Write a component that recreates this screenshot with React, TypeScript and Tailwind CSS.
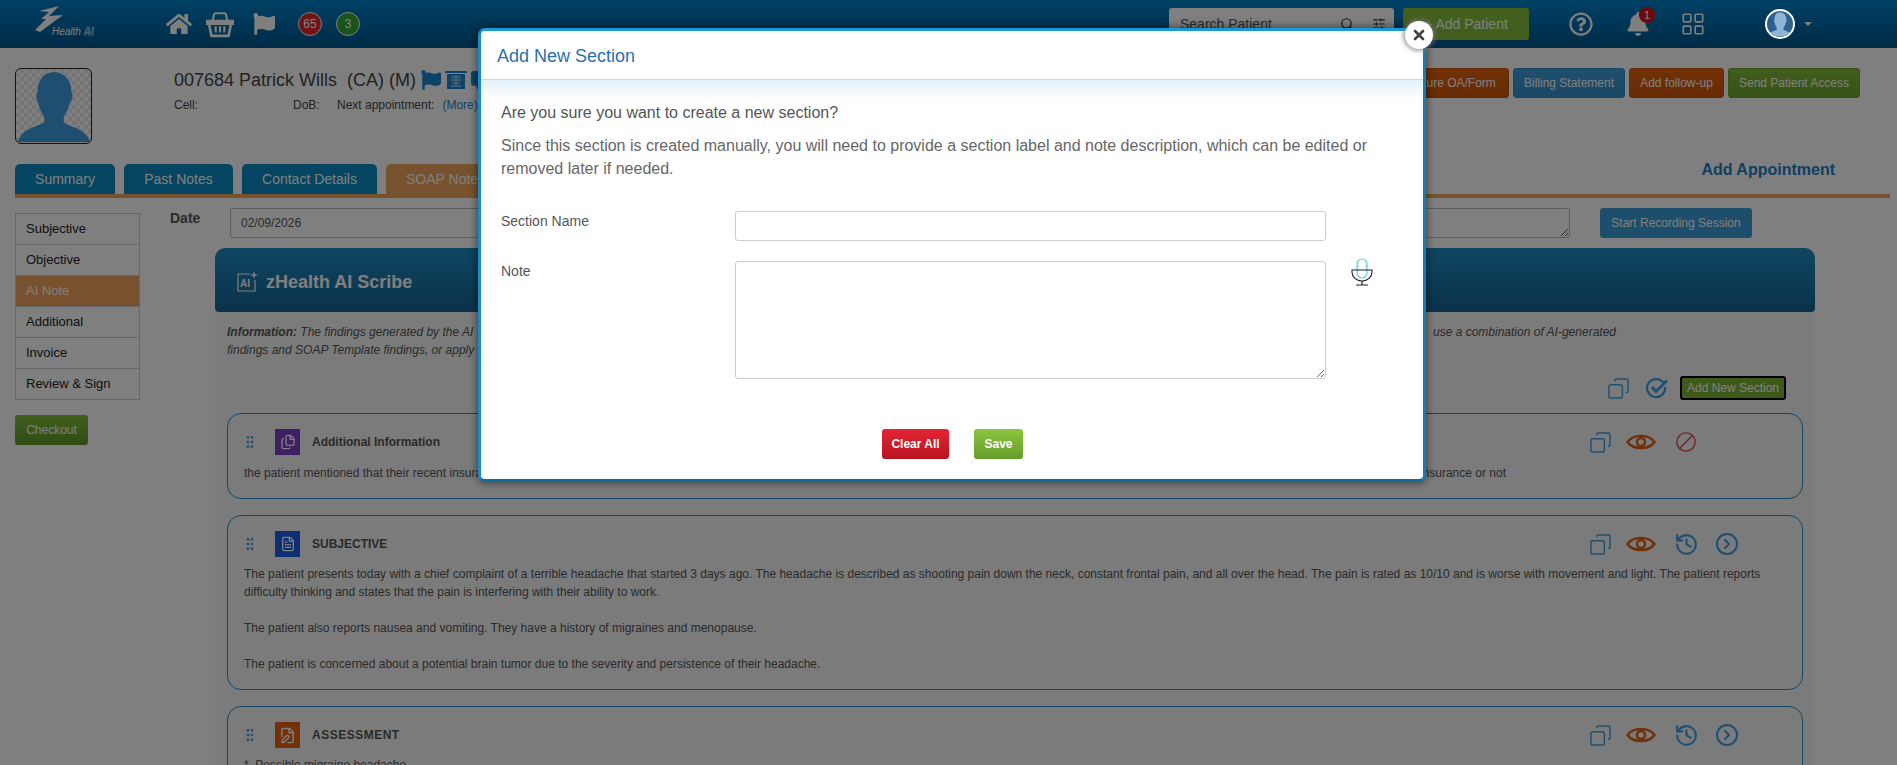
import { Ban, CircleChevronRight, Copy, FilePen, Files, FileText, GripVertical, History, LayoutGrid, Search, SlidersHorizontal, X } from 'lucide-react'
import { FaBell, FaFlag, FaHome, FaCommentAlt, FaRegQuestionCircle } from 'react-icons/fa'
import type { ReactNode } from 'react'

const tabs = [
  { label: 'Summary', className: 'w-[100px]' },
  { label: 'Past Notes', className: 'w-[109px]' },
  { label: 'Contact Details', className: 'w-[135px]' },
]

const sideItems = ['Subjective', 'Objective', 'AI Note', 'Additional', 'Invoice', 'Review & Sign']

function Basket() {
  return (
    <svg viewBox="0 0 26 26" className="size-[28px]" fill="none" stroke="#fff" strokeWidth="2">
      <path d="M6 11 L7.500 4 Q8 3 9 3 H17 Q18 3 18.500 4 L20 11" />
      <path d="M1 10 H25 V13 H1 Z" fill="#fff" />
      <path d="M3 14 L5 24 H21 L23 14" strokeWidth="2.400" />
      <path d="M9 15 V21 M13 15 V21 M17 15 V21" />
    </svg>
  )
}

function Silhouette({ fill }: { fill: string }) {
  return (
    <svg viewBox="0 0 77 76" className="size-full">
      <path
        fill={fill}
        d="M39 3 C28 3 22 12 22 24 C20 26 21 33 23 35 C24 42 27 46 29 49 L29 55 C20 60 6 61 2 75 H76 C72 61 56 60 49 55 L49 49 C51 46 54 42 55 35 C58 33 59 26 57 24 C57 12 50 3 39 3 Z"
      />
    </svg>
  )
}

function ActionButton({ className, children }: { className: string; children: ReactNode }) {
  return (
    <button className={`h-[30px] rounded-[3px] border text-xs whitespace-nowrap text-white ${className}`}>
      {children}
    </button>
  )
}

function AiIcon() {
  return (
    <svg viewBox="0 0 22 22" className="size-[22px]" fill="none" stroke="#fff" strokeWidth="1.200">
      <path d="M14 3 H2 V20 H19 V9" />
      <path d="M18 0 L19 3 L22 4 L19 5 L18 8 L17 5 L14 4 L17 3 Z" fill="#fff" stroke="none" />
      <text x="4" y="16" fontSize="10" fontWeight="700" fill="#fff" stroke="none" fontFamily="Liberation Sans">AI</text>
    </svg>
  )
}

function CheckRing() {
  return (
    <svg viewBox="0 0 22 20" className="h-[20px] w-[22px]" fill="none" stroke="#3f9ee0" strokeWidth="2.200">
      <path d="M17.500 5 A9 9 0 1 0 19 9" />
      <path d="M6 9 L10 13.500 L21 2.500" strokeWidth="2.800" />
    </svg>
  )
}

function EyeIcon() {
  return (
    <svg viewBox="0 0 30 20" className="ml-[14px] h-[20px] w-[30px]" fill="none" stroke="#e0600e" strokeWidth="2.500">
      <path d="M1.500 10 C7 2 23 2 28.500 10 C23 18 7 18 1.500 10 Z" />
      <circle cx="15" cy="10" r="4" />
    </svg>
  )
}

function Archive() {
  return (
    <svg viewBox="0 0 22 18" className="ml-[4px] h-[18px] w-[22px]" fill="#1b86d0">
      <path d="M0 0 H22 V2 H0 Z" />
      <path d="M2 3 H20 V18 H2 Z" />
      <path d="M6 6 H16 M6 9 H16 M11 4 V15 M7 12 H15 M6 15 H16" stroke="#cfe4f5" strokeWidth="1" />
    </svg>
  )
}

function Mic() {
  return (
    <svg viewBox="0 0 22 28" className="h-[28px] w-[22px]" fill="none">
      <rect x="6" y="1" width="10" height="19" rx="5" stroke="#5fd0d8" strokeWidth="1.200" />
      <path d="M6 8 H8 M14 8 H16 M6 12 H8 M14 12 H16" stroke="#5fd0d8" />
      <path d="M1 12 H21 V14 A10 9 0 0 1 1 14 Z" stroke="#222" strokeWidth="1.100" />
      <path d="M11 23 V27 M5 27 H17" stroke="#222" strokeWidth="1.200" />
    </svg>
  )
}

function CardIcons({ last }: { last: ReactNode }) {
  return (
    <div className="ml-auto flex h-[24px] w-[151px] items-center">
      <Copy className="size-[23px] -scale-x-100 text-[#3f9ee0]" strokeWidth={1.500} />
      <EyeIcon />
      {last}
    </div>
  )
}

const historyIcons = (
  <>
    <History className="ml-[18px] size-[25px] text-[#3f9ee0]" strokeWidth={2} />
    <CircleChevronRight className="ml-[16px] size-[24px] text-[#3f9ee0]" strokeWidth={2} />
  </>
)

function Card({
  icon,
  iconBg,
  title,
  titleClass,
  tall,
  bodyClass,
  actions,
  children,
}: {
  icon: ReactNode
  iconBg: string
  title: string
  titleClass: string
  tall: string
  bodyClass: string
  actions: ReactNode
  children: ReactNode
}) {
  return (
    <div className={`rounded-[14px] border border-[#2a8ccb] px-4 ${tall}`}>
      <div className="mt-[15px] flex h-[26px] items-center pr-[46px]">
        <GripVertical className="-ml-[2px] size-[16px] text-[#3f9ee0]" />
        <div className={`ml-[17px] flex h-[26px] w-[25px] items-center justify-center ${iconBg}`}>{icon}</div>
        <span className={`ml-[12px] text-xs font-bold text-[#555] ${titleClass}`}>{title}</span>
        {actions}
      </div>
      <div className={`text-xs leading-[18px] text-[#555] ${bodyClass}`}>{children}</div>
    </div>
  )
}

export default function App() {
  return (
    <div className="relative h-[765px] w-[1897px] overflow-hidden bg-white font-['Liberation_Sans',Arial,sans-serif]">
      {/* Top bar */}
      <header className="flex h-12 items-center bg-linear-to-b from-[#0082cc] to-[#00568c] text-white">
        <div className="relative ml-[35px] h-[36px] w-[62px]">
          <svg viewBox="0 0 28 26" className="h-[26px] w-[28px]">
            <path fill="#fff" d="M4 5 L24 0 L14 10 L28 9 L5 26 L0 24 L11 13 L6 13 L14 6 Z" />
          </svg>
          <span className="absolute top-[18px] left-[17px] text-[10px] whitespace-nowrap italic">
            Health <span className="bg-[#1a6fa8] font-bold text-[#8fd0f5]">AI</span>
          </span>
        </div>
        <FaHome className="ml-[69px] size-[26px]" />
        <div className="ml-[14px]"><Basket /></div>
        <FaFlag className="ml-[19px] size-[22px]" />
        <span className="ml-[23px] flex size-[24px] items-center justify-center rounded-full border border-white bg-[#e02b2b] text-xs">65</span>
        <span className="ml-[14px] flex size-[24px] items-center justify-center rounded-full border border-white bg-[#33a83a] text-xs">3</span>

        <div className="mt-2 ml-[809px] flex h-[32px] w-[225px] items-center self-start rounded-[3px] bg-white text-sm text-[#555]">
          <span className="pl-[11px]">Search Patient</span>
          <Search className="ml-auto size-[14px] text-[#222]" />
          <SlidersHorizontal className="mr-[8px] ml-[18px] size-[14px] text-[#222]" />
        </div>
        <button className="ml-[9px] h-8 w-[126px] rounded-[3px] bg-[#84bf3c] text-sm">+ Add Patient</button>
        <FaRegQuestionCircle className="ml-[40px] size-[24px]" />
        <div className="relative ml-[33px]">
          <FaBell className="size-[24px]" />
          <span className="absolute -top-[5px] left-[13px] flex size-[16px] items-center justify-center rounded-full bg-[#d8141c] text-[11px]">1</span>
        </div>
        <LayoutGrid className="ml-[30px] size-[26px]" strokeWidth={1.500} />
        <div className="relative z-10 ml-[59px] size-[30px] overflow-hidden rounded-full border-2 border-white bg-[#2f5f8f]">
          <Silhouette fill="#8fb4d6" />
        </div>
        <span className="ml-[9px] size-0 border-x-[4px] border-t-[4px] border-x-transparent border-t-white" />
      </header>

      {/* Patient row */}
      <section className="flex h-[96px] pt-5 pl-[15px]">
        <div className="h-[76px] w-[77px] overflow-hidden rounded-[6px] border border-[#222] bg-[repeating-conic-gradient(#e8e8e8_0_25%,#fff_0_50%)] bg-[length:8px_8px]">
          <Silhouette fill="#3f9ee0" />
        </div>
        <div className="ml-[82px]">
          <div className="flex h-[24px] items-center text-lg text-[#444]">
            <span className="whitespace-pre">007684 Patrick Wills  (CA) (M)</span>
            <FaFlag className="ml-[5px] size-[20px] text-[#1b86d0]" />
            <Archive />
            <FaCommentAlt className="ml-[4px] size-[18px] text-[#1b86d0]" />
          </div>
          <div className="mt-[5px] flex text-xs text-[#444]">
            <span className="w-[119px]">Cell:</span>
            <span className="w-[44px]">DoB:</span>
            <span>Next appointment:</span>
            <span className="ml-[8px] text-[#2a7fd0]">(More)</span>
          </div>
        </div>
        <div className="mr-[37px] ml-auto flex gap-[4px]">
          <ActionButton className="w-[140px] border-[#c9520a] bg-linear-to-b from-[#e6630e] to-[#cf560a] pl-[19px]">Capture OA/Form</ActionButton>
          <ActionButton className="w-[112px] border-[#2f8fcc] bg-linear-to-b from-[#3f9fda] to-[#3490cc]">Billing Statement</ActionButton>
          <ActionButton className="w-[95px] border-[#c9520a] bg-linear-to-b from-[#e6630e] to-[#cf560a]">Add follow-up</ActionButton>
          <ActionButton className="w-[132px] border-[#6ea52c] bg-linear-to-b from-[#82bc3a] to-[#6ea52c]">Send Patient Access</ActionButton>
        </div>
      </section>

      {/* Tabs */}
      <nav className="mx-[7px] mt-5 ml-[15px] flex h-[34px] gap-[9px] border-b-4 border-[#f0a45c]">
        {tabs.map((tab) => (
          <div key={tab.label} className={`flex items-center justify-center rounded-t-[5px] bg-[#0a8ac4] text-sm text-white ${tab.className}`}>
            {tab.label}
          </div>
        ))}
        <div className="flex w-[120px] items-center rounded-t-[5px] bg-[#f0a45c] pl-[20px] text-sm text-white">SOAP Note</div>
        <span className="mr-[55px] ml-auto -mt-[6px] self-start text-base font-bold text-[#1f7fc4]">Add Appointment</span>
      </nav>

      <div className="flex pl-[15px]">
        {/* Section list */}
        <aside className="mt-[15px] w-[125px]">
          <ul className="border border-b-0 border-[#ccc] text-[13px] text-[#222]">
            {sideItems.map((item) => (
              <li
                key={item}
                className={`flex h-[31px] items-center border-b border-[#ccc] pl-[10px] ${item === 'AI Note' ? 'bg-[#f0a45c] text-white' : ''}`}
              >
                {item}
              </li>
            ))}
          </ul>
          <button className="mt-[15px] h-[30px] w-[73px] rounded-[3px] bg-linear-to-b from-[#80bd3a] to-[#5f9a26] text-xs text-white">Checkout</button>
        </aside>

        <main className="ml-[30px] w-[1645px]">
          <div className="mt-[10px] flex h-[30px]">
            <span className="w-[60px] text-sm font-bold text-[#555]">Date</span>
            <input readOnly value="02/09/2026" className="h-[30px] w-[300px] rounded-[3px] border border-[#bbb] pl-[10px] text-xs text-[#555]" />
            <textarea readOnly className="ml-[430px] h-[30px] w-[610px] rounded-[3px] border border-[#bbb]" />
            <button className="ml-[30px] h-[30px] w-[152px] rounded-[3px] bg-[#3a9cd8] text-xs text-white">Start Recording Session</button>
          </div>

          <div className="mt-[10px] ml-[45px] w-[1600px]">
            <div className="flex h-[64px] items-center gap-[8px] rounded-t-[10px] rounded-b-[4px] bg-linear-to-b from-[#1f8cc4] to-[#156594] pt-[3px] pl-[21px] text-lg font-bold text-white">
              <AiIcon />
              zHealth AI Scribe
            </div>
            <div className="h-[500px] bg-[#f6f6f6] px-3 pt-[11px]">
              <div className="flex h-[18px] text-xs leading-[18px] text-[#555] italic">
                <span><b>Information:</b> The findings generated by the AI</span>
                <span className="mr-[187px] ml-auto">use a combination of AI-generated</span>
              </div>
              <p className="text-xs leading-[18px] text-[#555] italic">findings and SOAP Template findings, or apply</p>

              <div className="mt-[17px] flex h-[24px] items-center justify-end pr-[17px]">
                <Copy className="size-[23px] -scale-x-100 text-[#3f9ee0]" strokeWidth={1.500} />
                <div className="mr-[12px] ml-[16px]"><CheckRing /></div>
                <button className="h-[24px] w-[106px] rounded-[3px] border-2 border-black bg-[#7db436] text-xs text-white">Add New Section</button>
              </div>

              <div className="mt-[13px] flex flex-col gap-[16px]">
                <Card
                  tall="h-[86px]"
                  bodyClass="mt-[9px]"
                  iconBg="bg-[#7a3fc4]"
                  icon={<Files className="size-[16px] text-white" />}
                  title="Additional Information"
                  titleClass=""
                  actions={<CardIcons last={<Ban className="ml-[19px] size-[22px] -scale-x-100 text-[#e04444]" strokeWidth={1.500} />} />}
                >
                  <div className="flex">
                    <span>the patient mentioned that their recent insurance</span>
                    <span className="mr-[280px] ml-auto">insurance or not</span>
                  </div>
                </Card>
                <Card
                  tall="h-[175px]"
                  bodyClass="mt-[8px]"
                  iconBg="bg-[#1e5ee8]"
                  icon={<FileText className="size-[16px] text-white" />}
                  title="SUBJECTIVE"
                  titleClass=""
                  actions={<CardIcons last={historyIcons} />}
                >
                  The patient presents today with a chief complaint of a terrible headache that started 3 days ago. The headache is described as shooting pain down the neck, constant frontal pain, and all over the head. The pain is rated as 10/10 and is worse with movement and light. The patient reports
                  <br />
                  difficulty thinking and states that the pain is interfering with their ability to work.
                  <br />
                  <br />
                  The patient also reports nausea and vomiting. They have a history of migraines and menopause.
                  <br />
                  <br />
                  The patient is concerned about a potential brain tumor due to the severity and persistence of their headache.
                </Card>
                <Card
                  tall="h-[120px]"
                  bodyClass="mt-[8px] whitespace-pre"
                  iconBg="bg-[#e6630e]"
                  icon={<FilePen className="size-[17px] text-white" />}
                  title="ASSESSMENT"
                  titleClass="tracking-[0.5px]"
                  actions={<CardIcons last={historyIcons} />}
                >
                  {'*  Possible migraine headache'}
                </Card>
              </div>
            </div>
          </div>
        </main>
      </div>

      {/* Dimmed backdrop */}
      <div className="absolute inset-0 bg-black/50" />

      {/* Add New Section dialog */}
      <div className="absolute top-[28px] left-[478px] h-[454px] w-[948px] rounded-[7px] border-[3px] border-t-[#1a9ad6] border-r-[#0f7fb5] border-b-[#0c6c9c] border-l-[#1a8cc8] bg-white shadow-[0_0_10px_rgba(0,0,0,0.6)]">
        <button className="absolute -top-[10px] -right-[10px] flex size-[28px] items-center justify-center rounded-full bg-white shadow-[0_0_4px_2px_rgba(120,120,120,0.7)]">
          <X className="size-[16px] text-[#444]" strokeWidth={4} />
        </button>
        <div className="flex h-[49px] items-center border-b border-[#bcdcf2] pt-[1px] pl-4 text-lg text-[#2a70aa]">Add New Section</div>
        <div className="bg-linear-to-b from-[#e4f1fa] to-white bg-[length:100%_20px] bg-no-repeat px-5 pt-[21px] text-[#555]">
          <p className="text-base leading-[23px]">Are you sure you want to create a new section?</p>
          <p className="mt-[10px] w-[880px] text-base leading-[23px] text-[#666]">
            Since this section is created manually, you will need to provide a section label and note description, which can be edited or removed later if needed.
          </p>
          <div className="mt-[31px] flex h-[30px]">
            <label className="w-[234px] text-sm leading-[20px]">Section Name</label>
            <input className="h-[30px] w-[591px] rounded-[3px] border border-[#ccc]" />
          </div>
          <div className="mt-[20px] flex h-[118px]">
            <label className="w-[234px] text-sm leading-[20px]">Note</label>
            <textarea className="h-[118px] w-[591px] rounded-[3px] border border-[#ccc]" />
            <div className="-mt-[3px] ml-[25px]"><Mic /></div>
          </div>
          <div className="mt-[50px] ml-[381px] flex gap-[25px]">
            <button className="h-[30px] w-[67px] rounded-[3px] bg-linear-to-b from-[#e42434] to-[#b81420] text-xs font-bold text-white">Clear All</button>
            <button className="h-[30px] w-[49px] rounded-[3px] bg-linear-to-b from-[#8cc63f] to-[#649c2c] text-xs font-bold text-white">Save</button>
          </div>
        </div>
      </div>
    </div>
  )
}
